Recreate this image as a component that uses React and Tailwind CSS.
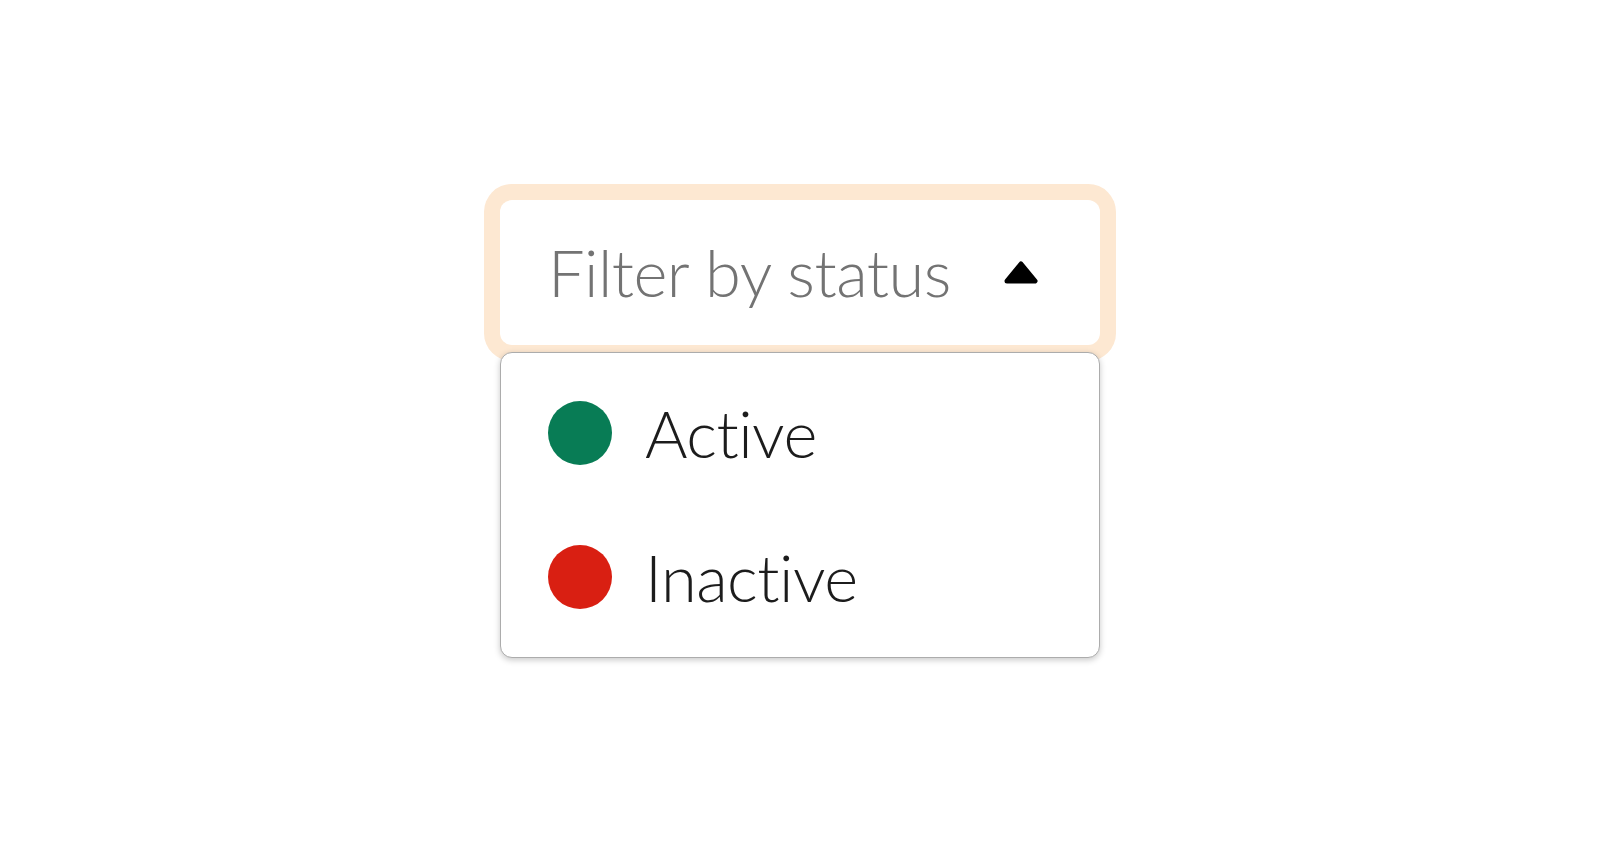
import { useState } from "react";

const statusOptions = [
  { label: "Active", dot: "bg-[#087c55]" },
  { label: "Inactive", dot: "bg-[#d91f12]" },
];

function CaretUp() {
  return (
    <svg width="34" height="24" viewBox="0 0 34 24" aria-hidden="true">
      <path
        d="M17 3 L31 20 L3 20 Z"
        fill="#000"
        stroke="#000"
        strokeWidth="5"
        strokeLinejoin="round"
      />
    </svg>
  );
}

export default function App() {
  const [isOpen, setIsOpen] = useState(true);

  return (
    <div className="flex min-h-[850px] justify-center bg-white pt-[200px] font-['Lato',sans-serif] [font-variant-ligatures:none]">
      <div className="relative w-[600px]">
        <button
          type="button"
          onClick={() => setIsOpen((open) => !open)}
          className="flex h-[145px] w-full items-center justify-between rounded-[12px] bg-white pl-[48px] pr-[62px] ring-[16px] ring-[#fde8d2]"
        >
          <span className="text-[65px] font-light leading-none tracking-[-0.5px] text-[#737373]">
            Filter by status
          </span>
          <CaretUp />
        </button>

        {isOpen && (
          <ul className="absolute left-0 right-0 top-[152px] z-10 rounded-[12px] border border-[#acacac] bg-white py-[8px] shadow-[0_2px_6px_rgba(0,0,0,0.22)]">
            {statusOptions.map((option) => (
              <li
                key={option.label}
                className="flex h-[144px] items-center gap-[33px] pl-[47px]"
              >
                <span className={`h-[64px] w-[64px] rounded-full ${option.dot}`} />
                <span className="text-[65px] font-light leading-none tracking-[-0.5px] text-[#1c1c1c]">
                  {option.label}
                </span>
              </li>
            ))}
          </ul>
        )}
      </div>
    </div>
  );
}
